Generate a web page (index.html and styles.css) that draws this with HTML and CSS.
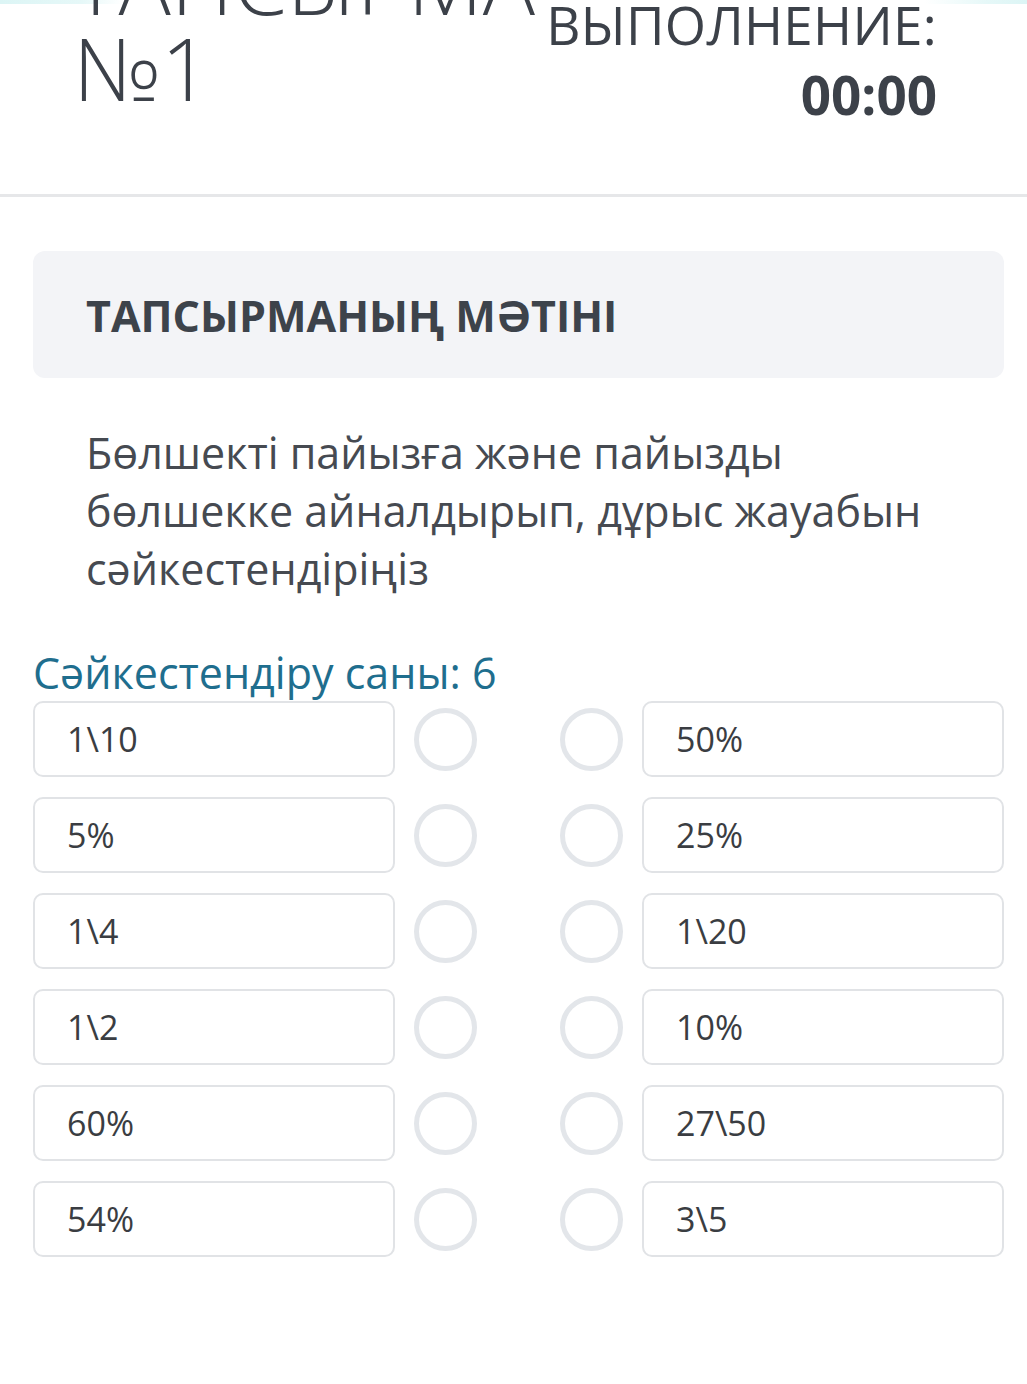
FILE: index.html
```html
<!DOCTYPE html>
<html lang="kk">
<head>
<meta charset="utf-8">
<title>Тапсырма №1</title>
<link rel="stylesheet" href="styles.css">
</head>
<body>
<header class="header">
  <h1 class="title">ТАПСЫРМА<br>№1</h1>
  <div class="timer">
    <div class="timer-label">ВРЕМЯ НА<br>ВЫПОЛНЕНИЕ:</div>
    <div class="timer-value">00:00</div>
  </div>
</header>
<main class="content">
  <section class="task-box">
    <h2 class="task-heading">ТАПСЫРМАНЫҢ МӘТІНІ</h2>
  </section>
  <p class="task-text">Бөлшекті пайызға және пайызды бөлшекке айналдырып, дұрыс жауабын сәйкестендіріңіз</p>
  <div class="match-count">Сәйкестендіру саны: 6</div>
  <div class="match-list">
    <div class="match-row"><div class="cell">1\10</div><span class="dot"></span><span class="spacer"></span><span class="dot"></span><div class="cell">50%</div></div>
    <div class="match-row"><div class="cell">5%</div><span class="dot"></span><span class="spacer"></span><span class="dot"></span><div class="cell">25%</div></div>
    <div class="match-row"><div class="cell">1\4</div><span class="dot"></span><span class="spacer"></span><span class="dot"></span><div class="cell">1\20</div></div>
    <div class="match-row"><div class="cell">1\2</div><span class="dot"></span><span class="spacer"></span><span class="dot"></span><div class="cell">10%</div></div>
    <div class="match-row"><div class="cell">60%</div><span class="dot"></span><span class="spacer"></span><span class="dot"></span><div class="cell">27\50</div></div>
    <div class="match-row"><div class="cell">54%</div><span class="dot"></span><span class="spacer"></span><span class="dot"></span><div class="cell">3\5</div></div>
  </div>
</main>
</body>
</html>
```
FILE: styles.css
```css
* { box-sizing: border-box; }

html, body {
  margin: 0;
  padding: 0;
  background: #ffffff;
}

body {
  font-family: "Open Sans", "Noto Sans", sans-serif;
  color: #3c4149;
  background-image: linear-gradient(to right, #dcf5f5 0, #e6f8f8 8%, #ffffff 12%, #ffffff 90%, #e6f8f8 96%, #dcf5f5 100%);
  background-repeat: no-repeat;
  background-size: 100% 4px;
}

.header {
  display: flex;
  align-items: flex-start;
  margin-top: -80px;
  padding: 0 90px 64px 73px;
  border-bottom: 3px solid #e6e7e9;
}

.title {
  flex: 0 0 auto;
  margin: 18px 0 0 0;
  font-size: 87px;
  line-height: 86px;
  font-weight: 300;
  white-space: nowrap;
  color: #3c4149;
}

.timer {
  margin-left: auto;
  flex: 0 0 auto;
  text-align: right;
  white-space: nowrap;
}

.timer-label {
  font-size: 53px;
  line-height: 70px;
  font-weight: 400;
  letter-spacing: 0.3px;
}

.timer-value {
  font-size: 53px;
  line-height: 70px;
  font-weight: 700;
}

.content {
  padding: 54px 23px 0 33px;
}

.task-box {
  background: #f3f4f7;
  border-radius: 12px;
  padding: 40px 53px 37px;
}

.task-heading {
  margin: 0;
  font-size: 43px;
  line-height: 50px;
  font-weight: 700;
  color: #3d434b;
}

.task-text {
  margin: 46px 0 0 0;
  padding: 0 60px 0 53px;
  font-size: 43px;
  line-height: 58px;
  color: #464a51;
}

.match-count {
  margin-top: 50px;
  font-size: 43px;
  line-height: 50px;
  color: #1f6e8e;
}

.match-list {
  display: flex;
  flex-direction: column;
  gap: 20px;
  margin-top: 3px;
}

.match-row {
  display: flex;
  align-items: center;
  gap: 19px;
}

.cell {
  flex: 1 1 0;
  height: 76px;
  border: 2px solid #e1e3e6;
  border-radius: 10px;
  padding: 0 32px;
  display: flex;
  align-items: center;
  font-size: 34px;
  color: #3a3d42;
}

.dot {
  flex: 0 0 63px;
  width: 63px;
  height: 63px;
  border: 5px solid #e3e6ea;
  border-radius: 50%;
}

.spacer {
  flex: 0 0 45px;
}
```
